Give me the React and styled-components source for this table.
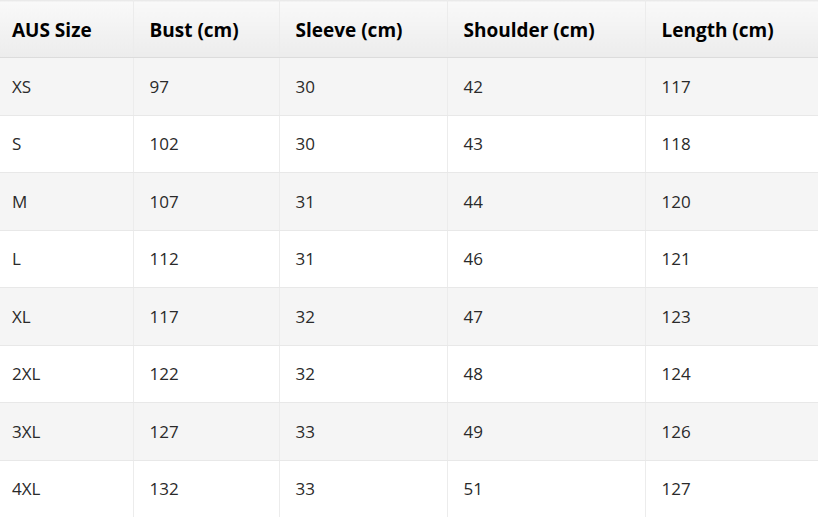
import React from 'react';
import styled, { createGlobalStyle } from 'styled-components';

const GlobalStyle = createGlobalStyle`
	html, body {
		margin: 0;
		padding: 0;
		background: #fff;
		overflow: hidden;
	}
	body {
		font-family: 'Open Sans', 'Noto Sans', sans-serif;
		color: #333;
	}
`;

const columns = [
	{ label: 'AUS Size', width: 133 },
	{ label: 'Bust (cm)', width: 146 },
	{ label: 'Sleeve (cm)', width: 168 },
	{ label: 'Shoulder (cm)', width: 198 },
	{ label: 'Length (cm)', width: 185 }
];

const sizes = [
	['XS', 97, 30, 42, 117],
	['S', 102, 30, 43, 118],
	['M', 107, 31, 44, 120],
	['L', 112, 31, 46, 121],
	['XL', 117, 32, 47, 123],
	['2XL', 122, 32, 48, 124],
	['3XL', 127, 33, 49, 126],
	['4XL', 132, 33, 51, 127]
];

const Table = styled.table`
	border-collapse: collapse;
	table-layout: fixed;
	width: 830px;
	border-top: 1px solid #eaeaea;
`;

const HeadCell = styled.th`
	height: 54px;
	padding: 2px 12px 0 16px;
	text-align: left;
	font-size: 19px;
	font-weight: 700;
	color: #000;
	background: linear-gradient(to bottom, #f9f9f9, #ececec);
	border-bottom: 1px solid #dcdcdc;
	border-left: 1px solid #ececec;
	&:first-child {
		border-left: none;
		padding-left: 12px;
	}
`;

const Row = styled.tr`
	background: ${props => (props.$striped ? '#f5f5f5' : '#fff')};
`;

const Cell = styled.td`
	height: 56.5px;
	padding: 0 12px 0 16px;
	font-size: 17px;
	font-weight: 400;
	color: #2a2a2a;
	border-bottom: 1px solid #e8e8e8;
	border-left: 1px solid #ececec;
	&:first-child {
		border-left: none;
		padding-left: 12px;
	}
`;

const App = () => (
	<>
		<GlobalStyle />
		<Table>
			<colgroup>
				{columns.map(col => (
					<col key={col.label} style={{ width: col.width }} />
				))}
			</colgroup>
			<thead>
				<tr>
					{columns.map(col => (
						<HeadCell key={col.label}>{col.label}</HeadCell>
					))}
				</tr>
			</thead>
			<tbody>
				{sizes.map((row, i) => (
					<Row key={row[0]} $striped={i % 2 === 0}>
						{row.map((value, j) => (
							<Cell key={j}>{value}</Cell>
						))}
					</Row>
				))}
			</tbody>
		</Table>
	</>
);

export default App;
